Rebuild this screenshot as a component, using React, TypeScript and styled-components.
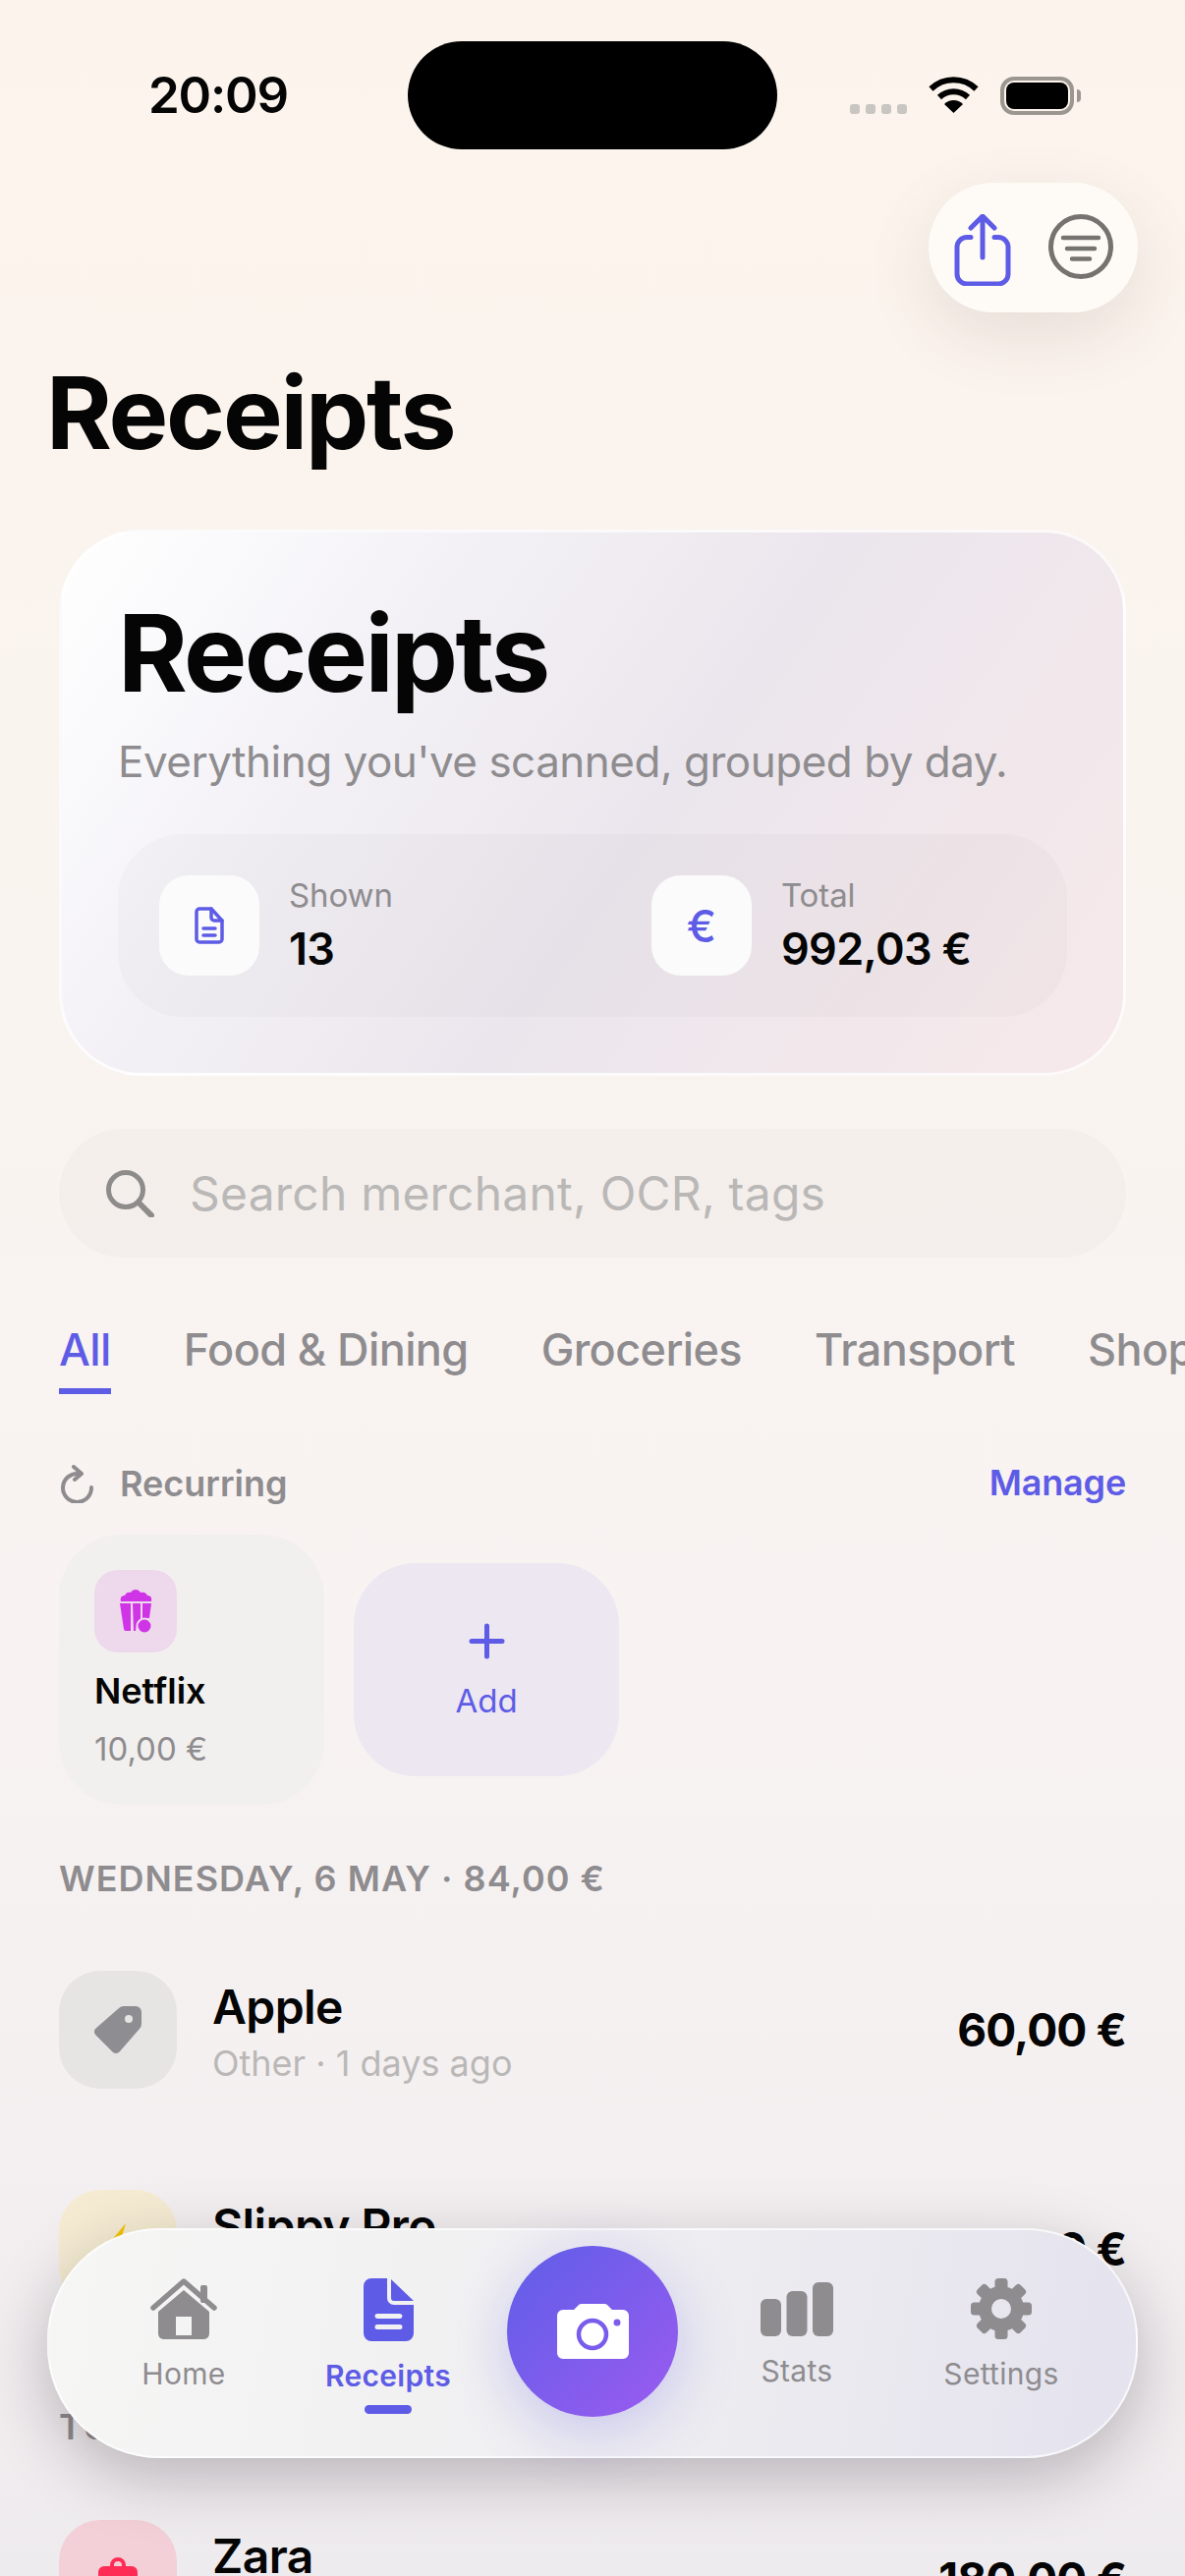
import styled, { createGlobalStyle } from "styled-components";

const colors = {
  accent: "#5e5ce6",
  ink: "#050505",
  gray: "#8e8c8f",
  soft: "#bab8b7",
};

const GlobalStyle = createGlobalStyle`
  html, body {
    margin: 0;
    padding: 0;
    overflow: hidden;
    background: #f7f2f0;
  }
  * {
    box-sizing: border-box;
  }
`;

const Page = styled.div`
  position: relative;
  width: 1206px;
  height: 2622px;
  overflow: hidden;
  padding: 42px 60px 0;
  font-family: Inter, "Liberation Sans", sans-serif;
  color: ${colors.ink};
  background: linear-gradient(180deg, #fcf4ec 0%, #faf4ef 30%, #f8f3f2 66%, #f3eff0 85%, #eeebee 100%);
`;

const StatusBar = styled.div`
  display: grid;
  grid-template-columns: 1fr 376px 1fr;
  height: 110px;
  margin: 0 -60px;
`;

const Time = styled.div`
  padding-left: 151px;
  font-size: 51px;
  font-weight: 600;
  line-height: 110px;
  letter-spacing: -1.2px;
`;

const Island = styled.div`
  background: #000;
  border-radius: 55px;
`;

const StatusIcons = styled.div`
  display: flex;
  align-items: flex-start;
  padding: 36px 0 0 74px;
`;

const SignalDots = styled.div`
  display: flex;
  gap: 6px;
  margin: 28px 22px 0 0;
`;

const SignalDot = styled.span`
  width: 10px;
  height: 10px;
  border-radius: 3px;
  background: #c9c5c0;
`;

const Battery = styled.div`
  width: 75px;
  height: 39px;
  margin-left: 22px;
  padding: 2px;
  border: 4px solid #9b9690;
  border-radius: 14px;
  position: relative;
  &::before {
    content: "";
    display: block;
    height: 100%;
    background: #000;
    border-radius: 8px;
  }
  &::after {
    content: "";
    position: absolute;
    right: -11px;
    top: 9px;
    width: 4px;
    height: 13px;
    background: #9b9690;
    border-radius: 0 4px 4px 0;
  }
`;

const Toolbar = styled.div`
  display: flex;
  justify-content: flex-end;
  margin: 34px -12px 0 0;
`;

const ToolbarPill = styled.div`
  display: flex;
  align-items: flex-start;
  gap: 38px;
  width: 213px;
  height: 132px;
  padding: 32px 0 0 26px;
  border-radius: 66px;
  background: #fefbf6;
  box-shadow: 0 24px 70px rgba(60, 50, 40, 0.11);
`;

const PageTitle = styled.h1`
  margin: 42px 0 0 -13px;
  font-size: 102px;
  font-weight: 700;
  line-height: 120px;
  letter-spacing: -2.2px;
`;

const Hero = styled.section`
  margin-top: 59px;
  height: 556px;
  padding: 63px 57px 0;
  border: 3px solid rgba(255, 255, 255, 0.75);
  border-radius: 84px;
  background: linear-gradient(125deg, #ffffff 0%, #f3f1f6 28%, #ebe6ed 55%, #f7e9ea 100%);
`;

const HeroTitle = styled.h2`
  margin: 0;
  font-size: 108px;
  font-weight: 700;
  line-height: 120px;
  letter-spacing: -2.6px;
`;

const HeroSubtitle = styled.p`
  margin: 20px 0 0;
  font-size: 44px;
  line-height: 60px;
  color: ${colors.gray};
  letter-spacing: -0.5px;
`;

const StatPanel = styled.div`
  display: grid;
  grid-template-columns: 501px 1fr;
  align-items: center;
  height: 186px;
  margin-top: 44px;
  padding: 0 42px;
  border-radius: 66px;
  background: rgba(120, 125, 120, 0.035);
`;

const Stat = styled.div`
  display: flex;
  align-items: center;
  gap: 30px;
`;

const StatIcon = styled.div`
  display: flex;
  align-items: center;
  justify-content: center;
  width: 102px;
  height: 102px;
  border-radius: 30px;
  background: #fbfbfb;
  color: ${colors.accent};
  font-size: 45px;
  font-weight: 500;
`;

const StatLabel = styled.div`
  margin-top: -2px;
  font-size: 33px;
  line-height: 42px;
  letter-spacing: -0.1px;
  color: ${colors.gray};
`;

const StatValue = styled.div`
  margin-top: 7px;
  font-size: 45px;
  font-weight: 600;
  line-height: 54px;
  letter-spacing: -0.7px;
`;

const SearchBar = styled.div`
  display: flex;
  align-items: center;
  gap: 36px;
  height: 131px;
  margin-top: 54px;
  padding-left: 47px;
  border-radius: 66px;
  background: rgba(120, 130, 115, 0.04);
`;

const SearchPlaceholder = styled.span`
  font-size: 48px;
  color: ${colors.soft};
  letter-spacing: 0.2px;
`;

const Tabs = styled.nav`
  display: flex;
  gap: 74px;
  margin: 64px -60px 0 0;
  white-space: nowrap;
`;

const Tab = styled.div<{ $active?: boolean }>`
  padding-bottom: 9px;
  border-bottom: 6px solid ${(p) => (p.$active ? colors.accent : "transparent")};
  font-size: 45px;
  font-weight: 500;
  line-height: 60px;
  letter-spacing: -0.6px;
  color: ${(p) => (p.$active ? colors.accent : colors.gray)};
`;

const SectionHeader = styled.div`
  display: flex;
  align-items: center;
  justify-content: space-between;
  height: 48px;
  margin-top: 67px;
`;

const SectionLabel = styled.div`
  display: flex;
  align-items: center;
  gap: 27px;
  padding-left: 2px;
  font-size: 36px;
  font-weight: 600;
  color: ${colors.gray};
`;

const ManageLink = styled.span`
  margin-top: -2px;
  font-size: 36px;
  font-weight: 600;
  letter-spacing: -0.2px;
  color: ${colors.accent};
`;

const RecurringStrip = styled.div`
  display: flex;
  align-items: center;
  gap: 30px;
  margin-top: 28px;
`;

const RecurringCard = styled.div`
  width: 270px;
  height: 275px;
  padding: 36px;
  border-radius: 63px;
  background: #f2f0ee;
`;

const CardIcon = styled.div`
  display: flex;
  align-items: center;
  justify-content: center;
  width: 84px;
  height: 84px;
  border-radius: 24px;
  background: #eed8ec;
`;

const CardName = styled.div`
  margin-top: 18px;
  font-size: 36px;
  font-weight: 600;
  line-height: 42px;
`;

const CardAmount = styled.div`
  margin-top: 17px;
  font-size: 33px;
  line-height: 42px;
  color: ${colors.gray};
`;

const AddCard = styled.div`
  display: flex;
  flex-direction: column;
  align-items: center;
  width: 270px;
  height: 217px;
  padding-top: 61px;
  border-radius: 63px;
  background: #ece7f0;
  color: ${colors.accent};
  font-size: 33px;
`;

const AddLabel = styled.span`
  margin-top: 22px;
  line-height: 40px;
`;

const DayHeader = styled.div<{ $top: number }>`
  margin-top: ${(p) => p.$top}px;
  font-size: 36px;
  font-weight: 600;
  line-height: 48px;
  letter-spacing: 1px;
  color: ${colors.gray};
  white-space: nowrap;
`;

const Row = styled.div<{ $top: number }>`
  display: grid;
  grid-template-columns: 120px 1fr auto;
  column-gap: 36px;
  align-items: center;
  height: 120px;
  margin-top: ${(p) => p.$top}px;
`;

const RowIcon = styled.div<{ $bg: string }>`
  display: flex;
  align-items: center;
  justify-content: center;
  height: 120px;
  border-radius: 42px;
  background: ${(p) => p.$bg};
`;

const RowText = styled.div`
  padding-top: 4px;
`;

const RowName = styled.div`
  font-size: 48px;
  font-weight: 600;
  line-height: 60px;
  letter-spacing: -0.6px;
`;

const RowMeta = styled.div`
  margin-top: 3px;
  font-size: 36px;
  line-height: 48px;
  color: ${colors.soft};
`;

const RowPrice = styled.div`
  font-size: 46px;
  font-weight: 700;
  letter-spacing: -0.9px;
  white-space: nowrap;
`;

const BottomNav = styled.nav`
  position: absolute;
  left: 48px;
  top: 2268px;
  display: grid;
  grid-template-columns: repeat(5, 1fr);
  align-items: start;
  width: 1110px;
  height: 234px;
  padding: 49px 33px 0;
  border-radius: 114px;
  border: 2px solid rgba(255, 255, 255, 0.7);
  background: linear-gradient(100deg, #f6f6f5 0%, #f2f1f2 35%, #ebeaf0 70%, #e4e3ee 100%);
  box-shadow: 0 20px 64px rgba(30, 20, 30, 0.26);
`;

const NavItem = styled.div<{ $active?: boolean }>`
  display: flex;
  flex-direction: column;
  align-items: center;
  color: ${(p) => (p.$active ? colors.accent : colors.gray)};
`;

const NavLabel = styled.span<{ $active?: boolean }>`
  margin-top: 15px;
  font-size: 30px;
  font-weight: ${(p) => (p.$active ? 600 : 400)};
  line-height: 40px;
  letter-spacing: 0.3px;
`;

const NavIndicator = styled.span`
  width: 48px;
  height: 9px;
  margin-top: 10px;
  border-radius: 5px;
  background: ${colors.accent};
`;

const CameraButton = styled.button`
  display: flex;
  align-items: center;
  justify-content: center;
  justify-self: center;
  width: 174px;
  height: 174px;
  margin-top: -33px;
  padding: 0;
  border: 0;
  border-radius: 50%;
  background: linear-gradient(135deg, #5e5ee8 0%, #9b5bf0 100%);
  box-shadow: 0 14px 60px rgba(94, 92, 230, 0.28);
`;

const StatsGlyph = styled.svg`
  margin-top: 4px;
`;

const ShareIcon = () => (
  <svg width="58" height="73" viewBox="0 0 58 73" fill="none" stroke={colors.accent} strokeWidth="5" strokeLinecap="round" strokeLinejoin="round">
    <path d="M17 23.5H13a10 10 0 0 0-10 10V61a10 10 0 0 0 10 10h32a10 10 0 0 0 10-10V33.500a10 10 0 0 0-10-10h-4" />
    <path d="M29 3v41M17 14 29 2l12 12" />
  </svg>
);

const FilterIcon = () => (
  <svg width="66" height="66" viewBox="0 0 66 66" fill="none" stroke="#75736f" strokeLinecap="round">
    <circle cx="33" cy="33" r="30.500" strokeWidth="5" />
    <path d="M15 24h36M19 35h28M24 45.500h18" strokeWidth="4.500" />
  </svg>
);

const WifiIcon = () => (
  <svg width="51" height="37" viewBox="0 0 51 37" fill="none" stroke="#000" strokeWidth="6">
    <path d="M2.500 12.500a33 33 0 0 1 46 0M11 21a21 21 0 0 1 29 0" />
    <path d="M25.500 37 16 28a13.500 13.500 0 0 1 19 0Z" fill="#000" stroke="none" />
  </svg>
);

const DocOutline = () => (
  <svg width="30" height="38" viewBox="0 0 30 38" fill="none" stroke={colors.accent} strokeWidth="3.500" strokeLinejoin="round" strokeLinecap="round">
    <path d="M5 2h12l11 12v19a3 3 0 0 1-3 3H5a3 3 0 0 1-3-3V5a3 3 0 0 1 3-3Z" />
    <path d="M17 2v9a3 3 0 0 0 3 3h8M9 22h12M9 29h12" />
  </svg>
);

const SearchIcon = () => (
  <svg width="50" height="48" viewBox="0 0 50 48" fill="none" stroke="#8e8c8a" strokeLinecap="round">
    <circle cx="21" cy="20" r="17.500" strokeWidth="5" />
    <path d="M34 33 47 46" strokeWidth="6" />
  </svg>
);

const RepeatIcon = () => (
  <svg width="33" height="39" viewBox="0 0 33 39" fill="none" stroke={colors.gray} strokeWidth="4" strokeLinecap="round" strokeLinejoin="round">
    <path d="M18 9A14.500 14.500 0 1 0 31 23" />
    <path d="M13 2l8 7-7 6" />
  </svg>
);

const PopcornIcon = () => (
  <svg width="33" height="46" viewBox="0 0 33 46" fill="#cf35e6">
    <path d="M1 13c-1-4 1-6 4-6 1-3 4-4 6-3 2-4 8-4 10 0 3-1 6 0 7 3 3 0 5 2 4 6Z" />
    <path d="M0 15h11v28H6a2 2 0 0 1-2-2ZM13 15h8v16l-4 5-1 7h-2ZM23 15h9l-2 15h-7Z" />
    <circle cx="25" cy="38" r="7.500" stroke="#eed8ec" strokeWidth="2" />
  </svg>
);

const PlusIcon = () => (
  <svg width="37" height="37" viewBox="0 0 37 37" stroke={colors.accent} strokeWidth="5" strokeLinecap="round">
    <path d="M18.500 3v31M3 18.500h31" />
  </svg>
);

const TagIcon = () => (
  <svg width="50" height="50" viewBox="0 0 50 50" fill="#8e8d92" fillRule="evenodd">
    <path d="M31 1h12a6 6 0 0 1 6 6v12a7 7 0 0 1-2 5L27 47a5 5 0 0 1-7 1L3 31a5 5 0 0 1-1-7L26 3a7 7 0 0 1 5-2ZM36 10a4 4 0 1 0 0 8 4 4 0 0 0 0-8Z" />
  </svg>
);

const BoltIcon = () => (
  <svg width="40" height="52" viewBox="0 0 40 52" fill="#f5c400">
    <path d="M28 0 3 30h15l-5 22 24-32H22Z" />
  </svg>
);

const BagIcon = () => (
  <svg width="42" height="44" viewBox="0 0 42 44" fill="#ff2d55">
    <path d="M13 12V8a8 8 0 0 1 16 0v4h-4V8a4 4 0 0 0-8 0v4Z" />
    <rect x="1" y="9" width="40" height="35" rx="6" />
  </svg>
);

const HomeIcon = () => (
  <svg width="70" height="62" viewBox="0 0 70 62" fill="currentColor" fillRule="evenodd">
    <path d="M4 30 35 3l31 27" fill="none" stroke="currentColor" strokeWidth="5.500" strokeLinecap="round" strokeLinejoin="round" />
    <rect x="52" y="7" width="7" height="18" rx="2" />
    <path d="M35 12 61 34v22a6 6 0 0 1-5 6H14a6 6 0 0 1-5-6V34ZM27 39v19h16V39Z" />
  </svg>
);

const ReceiptIcon = () => (
  <svg width="51" height="64" viewBox="0 0 51 64" fill="currentColor" fillRule="evenodd">
    <path d="M8 0h16v20a7 7 0 0 0 7 7h20v29a8 8 0 0 1-8 8H8a8 8 0 0 1-8-8V8a8 8 0 0 1 8-8ZM14 36a2.500 2.500 0 0 0 0 5h23a2.500 2.500 0 0 0 0-5ZM14 47a2.500 2.500 0 0 0 0 5h23a2.500 2.500 0 0 0 0-5Z" />
    <path d="M28 1 51 23H31a3 3 0 0 1-3-3Z" />
  </svg>
);

const CameraIcon = () => (
  <svg width="73" height="56" viewBox="0 0 73 56" fill="#fff">
    <path d="M6 6h11l5-5q1-1 3-1h23q2 0 3 1l5 5h11a6 6 0 0 1 6 6v38a6 6 0 0 1-6 6H6a6 6 0 0 1-6-6V12a6 6 0 0 1 6-6Z" />
    <circle cx="36" cy="31" r="14" fill="none" stroke="#7a5cec" strokeWidth="4.500" />
    <circle cx="61" cy="19" r="3.500" fill="#7f5bec" />
  </svg>
);

const StatsIcon = () => (
  <StatsGlyph width="74" height="55" viewBox="0 0 74 55" fill="currentColor">
    <rect x="0" y="17" width="21" height="38" rx="6" />
    <rect x="26.500" y="9" width="21" height="46" rx="6" />
    <rect x="53" y="0" width="21" height="55" rx="6" />
  </StatsGlyph>
);

const GearIcon = () => (
  <svg width="62" height="62" viewBox="0 0 62 62" fill="currentColor">
    {[0, 45, 90, 135, 180, 225, 270, 315].map((deg) => (
      <rect key={deg} x="24.500" y="0" width="13" height="16" rx="3.500" transform={`rotate(${deg} 31 31)`} />
    ))}
    <circle cx="31" cy="31" r="16.500" fill="none" stroke="currentColor" strokeWidth="13" />
  </svg>
);

function App() {
  return (
    <Page>
      <GlobalStyle />
      <StatusBar>
        <Time>20:09</Time>
        <Island />
        <StatusIcons>
          <SignalDots>
            <SignalDot />
            <SignalDot />
            <SignalDot />
            <SignalDot />
          </SignalDots>
          <WifiIcon />
          <Battery />
        </StatusIcons>
      </StatusBar>

      <Toolbar>
        <ToolbarPill>
          <ShareIcon />
          <FilterIcon />
        </ToolbarPill>
      </Toolbar>

      <PageTitle>Receipts</PageTitle>

      <Hero>
        <HeroTitle>Receipts</HeroTitle>
        <HeroSubtitle>Everything you've scanned, grouped by day.</HeroSubtitle>
        <StatPanel>
          <Stat>
            <StatIcon>
              <DocOutline />
            </StatIcon>
            <div>
              <StatLabel>Shown</StatLabel>
              <StatValue>13</StatValue>
            </div>
          </Stat>
          <Stat>
            <StatIcon>€</StatIcon>
            <div>
              <StatLabel>Total</StatLabel>
              <StatValue>992,03 €</StatValue>
            </div>
          </Stat>
        </StatPanel>
      </Hero>

      <SearchBar>
        <SearchIcon />
        <SearchPlaceholder>Search merchant, OCR, tags</SearchPlaceholder>
      </SearchBar>

      <Tabs>
        <Tab $active>All</Tab>
        <Tab>Food &amp; Dining</Tab>
        <Tab>Groceries</Tab>
        <Tab>Transport</Tab>
        <Tab>Shopping</Tab>
      </Tabs>

      <SectionHeader>
        <SectionLabel>
          <RepeatIcon />
          Recurring
        </SectionLabel>
        <ManageLink>Manage</ManageLink>
      </SectionHeader>

      <RecurringStrip>
        <RecurringCard>
          <CardIcon>
            <PopcornIcon />
          </CardIcon>
          <CardName>Netflix</CardName>
          <CardAmount>10,00 €</CardAmount>
        </RecurringCard>
        <AddCard>
          <PlusIcon />
          <AddLabel>Add</AddLabel>
        </AddCard>
      </RecurringStrip>

      <DayHeader $top={51}>WEDNESDAY, 6 MAY · 84,00 €</DayHeader>
      <Row $top={70}>
        <RowIcon $bg="#e7e4e4">
          <TagIcon />
        </RowIcon>
        <RowText>
          <RowName>Apple</RowName>
          <RowMeta>Other · 1 days ago</RowMeta>
        </RowText>
        <RowPrice>60,00 €</RowPrice>
      </Row>
      <Row $top={103}>
        <RowIcon $bg="#f5ebd2">
          <BoltIcon />
        </RowIcon>
        <RowText>
          <RowName>Slippy Pro</RowName>
          <RowMeta>Subscriptions · 1 days ago</RowMeta>
        </RowText>
        <RowPrice>24,00 €</RowPrice>
      </Row>

      <DayHeader $top={97}>TUESDAY, 5 MAY · 180,00 €</DayHeader>
      <Row $top={71}>
        <RowIcon $bg="#f3d0d8">
          <BagIcon />
        </RowIcon>
        <RowText>
          <RowName>Zara</RowName>
          <RowMeta>Shopping · 2 days ago</RowMeta>
        </RowText>
        <RowPrice>180,00 €</RowPrice>
      </Row>

      <BottomNav>
        <NavItem>
          <HomeIcon />
          <NavLabel>Home</NavLabel>
        </NavItem>
        <NavItem $active>
          <ReceiptIcon />
          <NavLabel $active>Receipts</NavLabel>
          <NavIndicator />
        </NavItem>
        <CameraButton>
          <CameraIcon />
        </CameraButton>
        <NavItem>
          <StatsIcon />
          <NavLabel>Stats</NavLabel>
        </NavItem>
        <NavItem>
          <GearIcon />
          <NavLabel>Settings</NavLabel>
        </NavItem>
      </BottomNav>
    </Page>
  );
}

export default App;
